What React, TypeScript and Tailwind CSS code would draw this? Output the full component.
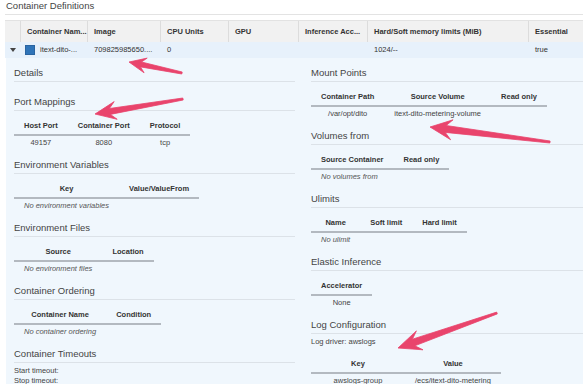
import React from 'react'

type Cell = string

interface DataTableProps {
  cols: string[]
  rows?: Cell[][]
  empty?: string
  className?: string
  firstColClass?: string
}

function Heading({ children }: { children: React.ReactNode }) {
  return (
    <div className="text-[9.5px] leading-[12px] pb-[2px] border-b border-[#dce2e8] text-[#444] whitespace-nowrap">
      {children}
    </div>
  )
}

function DataTable({ cols, rows = [], empty, className = 'mt-[7px]', firstColClass = '' }: DataTableProps) {
  return (
    <table className={`border-collapse ${className}`}>
      <thead>
        <tr>
          {cols.map((c, i) => (
            <th
              key={c}
              className={`px-[10px] py-[3px] text-[7.5px] leading-[10px] font-bold text-[#333] text-center whitespace-nowrap border-b-2 border-[#b3b9c0] ${i === 0 ? firstColClass : ''}`}
            >
              {c}
            </th>
          ))}
        </tr>
      </thead>
      <tbody>
        {empty ? (
          <tr>
            <td className="px-[10px] py-[2px] text-[7.5px] leading-[10px] italic text-[#555] whitespace-nowrap text-left">
              {empty}
            </td>
            {cols.slice(1).map((c) => (
              <td key={c} />
            ))}
          </tr>
        ) : (
          rows.map((r, i) => (
            <tr key={i}>
              {r.map((v, j) => (
                <td key={j} className="px-[10px] py-[2px] text-[7.5px] leading-[10px] text-[#444] text-center whitespace-nowrap">
                  {v}
                </td>
              ))}
            </tr>
          ))
        )}
      </tbody>
    </table>
  )
}

const arrows = [
  { x1: 182, y1: 73, x2: 129, y2: 62, hl: 17, hw: 15, sw: 5 },
  { x1: 183, y1: 99, x2: 95, y2: 114, hl: 21, hw: 18, sw: 6 },
  { x1: 550, y1: 142, x2: 430, y2: 127, hl: 22, hw: 20, sw: 7 },
  { x1: 497, y1: 313, x2: 398, y2: 348, hl: 23, hw: 20, sw: 7 },
]

function arrowPoints(a: (typeof arrows)[number]) {
  const dx = a.x2 - a.x1
  const dy = a.y2 - a.y1
  const len = Math.hypot(dx, dy)
  const ux = dx / len
  const uy = dy / len
  const nx = -uy
  const ny = ux
  const p = (x: number, y: number) => `${x.toFixed(1)},${y.toFixed(1)}`
  const bx = a.x2 - ux * a.hl
  const by = a.y2 - uy * a.hl
  const jx = a.x2 - ux * a.hl * 0.72
  const jy = a.y2 - uy * a.hl * 0.72
  return [
    p(a.x2, a.y2),
    p(bx + (nx * a.hw) / 2, by + (ny * a.hw) / 2),
    p(jx + (nx * a.sw) / 2, jy + (ny * a.sw) / 2),
    p(a.x1 + nx * 1, a.y1 + ny * 1),
    p(a.x1 - nx * 1, a.y1 - ny * 1),
    p(jx - (nx * a.sw) / 2, jy - (ny * a.sw) / 2),
    p(bx - (nx * a.hw) / 2, by - (ny * a.hw) / 2),
  ].join(' ')
}

const topCols = [
  { label: '', value: '' },
  { label: 'Container Nam...', value: 'itext-dito-...' },
  { label: 'Image', value: '709825985650....' },
  { label: 'CPU Units', value: '0' },
  { label: 'GPU', value: '' },
  { label: 'Inference Acc...', value: '' },
  { label: 'Hard/Soft memory limits (MiB)', value: '1024/--' },
  { label: 'Essential', value: 'true' },
]

export default function App() {
  return (
    <div className="relative w-[583px] h-[384px] overflow-hidden bg-white font-['Liberation_Sans',Arial,sans-serif] text-[#333]">
      <div className="ml-[5px] h-[15px] border-b border-[#e3e3e3] text-[9.5px] leading-[12px] pl-[1px] text-[#444]">
        Container Definitions
      </div>

      {/* summary table */}
      <div className="ml-[5px] mt-[5px] w-[600px]">
        <div className="grid grid-cols-[15px_67px_73px_68px_70px_69px_161px_1fr] h-[22px] bg-[#f1f1f1] border-t border-[#e2e2e2]">
          {topCols.map((c, i) => (
            <div
              key={i}
              className={`flex items-center pl-[6px] text-[7.5px] font-bold text-[#333] whitespace-nowrap ${i > 0 ? 'border-l border-[#dcdcdc]' : ''}`}
            >
              {c.label}
            </div>
          ))}
        </div>
        <div className="grid grid-cols-[15px_67px_73px_68px_70px_69px_161px_1fr] h-[16px] bg-[#e7f1fb]">
          {topCols.map((c, i) =>
            i === 0 ? (
              <div key={i} className="flex items-center justify-center pl-[1px]">
                <svg width="6" height="4" viewBox="0 0 6 4">
                  <path d="M0 0 L6 0 L3 4 Z" fill="#444" />
                </svg>
              </div>
            ) : i === 1 ? (
              <div key={i} className="flex items-center gap-[5px] pl-[5px] text-[7.5px] text-[#333] whitespace-nowrap">
                <span className="w-[10px] h-[10px] bg-[#2f74b8] border border-[#2a64a0]" />
                {c.value}
              </div>
            ) : (
              <div key={i} className="flex items-center pl-[7px] text-[7.5px] text-[#333] whitespace-nowrap">
                {c.value}
              </div>
            )
          )}
        </div>
      </div>

      {/* expanded details */}
      <div className="ml-[6px] h-[400px] bg-[#f0f7fd] pt-[9px] pl-[8px] grid grid-cols-[281px_281px] gap-x-[16px]">
        <div className="flex flex-col gap-[9px]">
          <div className="h-[20px]">
            <Heading>Details</Heading>
          </div>
          <div>
            <Heading>Port Mappings</Heading>
            <DataTable cols={['Host Port', 'Container Port', 'Protocol']} rows={[['49157', '8080', 'tcp']]} />
          </div>
          <div>
            <Heading>Environment Variables</Heading>
            <DataTable cols={['Key', 'Value/ValueFrom']} empty="No environment variables" />
          </div>
          <div>
            <Heading>Environment Files</Heading>
            <DataTable cols={['Source', 'Location']} empty="No environment files" />
          </div>
          <div>
            <Heading>Container Ordering</Heading>
            <DataTable cols={['Container Name', 'Condition']} empty="No container ordering" />
          </div>
          <div>
            <Heading>Container Timeouts</Heading>
            <div className="mt-[3px] text-[7.5px] leading-[10px] text-[#444]">Start timeout:</div>
            <div className="text-[7.5px] leading-[10px] text-[#444]">Stop timeout:</div>
          </div>
        </div>

        <div className="flex flex-col gap-[9px]">
          <div>
            <Heading>Mount Points</Heading>
            <DataTable
              cols={['Container Path', 'Source Volume', 'Read only']}
              rows={[['/var/opt/dito', 'itext-dito-metering-volume', '']]}
            />
          </div>
          <div>
            <Heading>Volumes from</Heading>
            <DataTable cols={['Source Container', 'Read only']} empty="No volumes from" />
          </div>
          <div>
            <Heading>Ulimits</Heading>
            <DataTable cols={['Name', 'Soft limit', 'Hard limit']} empty="No ulimit" />
          </div>
          <div>
            <Heading>Elastic Inference</Heading>
            <DataTable cols={['Accelerator']} rows={[['None']]} />
          </div>
          <div>
            <Heading>Log Configuration</Heading>
            <div className="mt-[3px] text-[7.5px] leading-[10px] text-[#444]">Log driver: awslogs</div>
            <DataTable
              className="mt-[9px]"
              firstColClass="w-[94px]"
              cols={['Key', 'Value']}
              rows={[['awslogs-group', '/ecs/itext-dito-metering']]}
            />
          </div>
        </div>
      </div>

      {/* annotation arrows */}
      <svg className="absolute inset-0 pointer-events-none" width="583" height="384" viewBox="0 0 583 384">
        {arrows.map((a, i) => (
          <polygon key={i} points={arrowPoints(a)} fill="#e9446c" strokeLinejoin="round" stroke="#e9446c" strokeWidth="0.8" />
        ))}
      </svg>
    </div>
  )
}
